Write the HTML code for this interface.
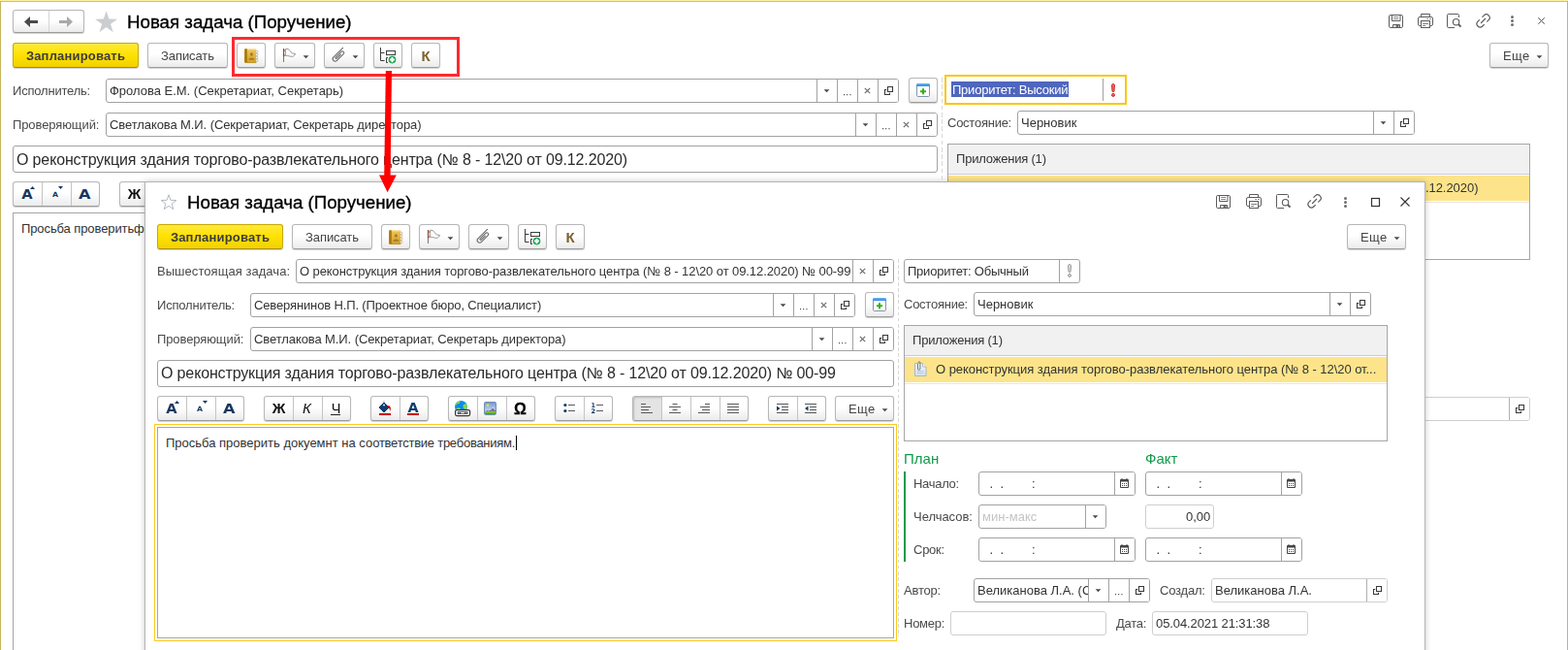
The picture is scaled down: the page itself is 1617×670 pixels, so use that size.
<!DOCTYPE html><html lang="ru"><head><meta charset="utf-8"><title>Новая задача (Поручение)</title><style>
*{box-sizing:border-box;margin:0;padding:0}
html,body{width:1617px;height:670px;overflow:hidden;background:#fff}
body{font-family:"Liberation Sans",sans-serif;font-size:13px;color:#333;position:relative}
#root{position:absolute;left:0;top:0;width:1617px;height:670px;overflow:hidden}
.t,.v,.bt,.ga,.gb{will-change:transform}
.t.lcd{will-change:auto}
.a{position:absolute}
.t{position:absolute;white-space:nowrap;line-height:16px;height:16px}
.lbl{color:#4a4a4a}
.btn{position:absolute;border:1px solid #b7b7b7;border-bottom-color:#9c9c9c;border-radius:3px;background:linear-gradient(#ffffff 0%,#ffffff 45%,#ebebeb 100%);box-shadow:0 1px 1px rgba(0,0,0,.18)}
.btn.y{border-color:#c6a800;border-bottom-color:#a78d00;background:linear-gradient(#ffe93a 0%,#ffe100 50%,#f2d000 100%)}
.btn.on{background:#e6e6e6;box-shadow:inset 0 1px 2px rgba(0,0,0,.15)}
.bt{position:absolute;left:0;right:0;text-align:center;white-space:nowrap;line-height:16px;color:#444}
.f{position:absolute;border:1px solid #a2a2a2;border-radius:3px;background:#fff;overflow:hidden}
.f.ro{border-color:#cfcfcf}
.f.ro .s{background:#b0b0b0}
.f .v{position:absolute;left:3px;white-space:nowrap;line-height:16px;color:#333}
.f .s{position:absolute;top:0;bottom:0;width:1px;background:#a2a2a2}
.f .i{position:absolute;top:0;bottom:0;width:21px}
svg{position:absolute;overflow:visible}
.tbl{position:absolute;border:1px solid #a6a6a6;background:#fff}
.tbl .h{position:absolute;left:0;right:0;top:0;height:31px;background:#f1f1f1;border-bottom:1px solid #cdcdcd}
.tbl .r{position:absolute;left:0;right:0;top:32px;height:26px;background:#fde48b}
.tbl .rl{position:absolute;left:0;right:0;top:59px;height:1px;background:#e6e6e6}
.grp{position:absolute;border:1px solid #b7b7b7;border-bottom-color:#9c9c9c;border-radius:3px;background:linear-gradient(#ffffff 0%,#ffffff 45%,#ebebeb 100%);box-shadow:0 1px 1px rgba(0,0,0,.18)}
.grp .d{position:absolute;top:0;bottom:0;width:1px;background:#c4c4c4}
.grp .on{position:absolute;top:0;bottom:0;background:#e4e4e4;box-shadow:inset 1px 1px 2px rgba(0,0,0,.18)}
.ga{position:absolute;font-family:"DejaVu Sans","Liberation Sans",sans-serif;font-weight:bold;color:#17375e;line-height:18px;white-space:nowrap}
.gb{position:absolute;top:4px;text-align:center;font-size:15px;color:#111;line-height:18px;white-space:nowrap}
.dash{width:1px;background:repeating-linear-gradient(to bottom,#d8d8d8 0,#d8d8d8 3.8px,transparent 3.8px,transparent 6.07px)}
.dash.m{background:repeating-linear-gradient(to bottom,#d8d8d8 0,#d8d8d8 4.5px,transparent 4.5px,transparent 7.2px)}
.tbl .r{overflow:hidden}
</style></head><body><div id="root">
<div class="a" id="main" style="left:0;top:0;width:1617px;height:670px;border-left:1px solid #c7b45c;border-right:1px solid #c8b55e;border-top:2px solid #d2c06c;background:#fff"></div>
<div class="a" style="left:0;top:0;width:1617px;height:1px;background:#fdf0a0"></div>
<div class="grp" style="left:13px;top:10px;width:74px;height:24px"><div class="d" style="left:36px;background:#d6d6d6"></div><svg style="left:11px;top:6px" width="14" height="11" viewBox="0 0 14 11"><path d="M0 5.5l6-5.5v4H14v3H6V11z" fill="#4a4a4a"/></svg><svg style="left:47px;top:6px" width="14" height="11" viewBox="0 0 14 11"><path d="M14 5.5l-6-5.5v4H0v3h8V11z" fill="#a9a9a9"/></svg></div>
<svg style="left:97px;top:11px" width="25" height="23" viewBox="0 0 25 23"><path d="M12.60 0.30L15.36 8.60L24.11 8.66L17.07 13.85L19.71 22.19L12.60 17.10L5.49 22.19L8.13 13.85L1.09 8.66L9.84 8.60z" fill="#cbced1"/></svg>
<div class="t " style="left:131px;top:12px;font-size:18.7px;color:#000;line-height:22px;height:22px;-webkit-text-stroke:0.35px #000;">Новая задача (Поручение)</div>
<svg style="left:1432px;top:15px" width="15" height="14" viewBox="0 0 15 14"><rect x="0.5" y="0.5" width="14" height="13" rx="1.3" fill="#fff" stroke="#5c5c5c"/><path d="M3.5 0.5v6h8.5v-6" fill="none" stroke="#5c5c5c"/><path d="M5.2 2.5h5M5.2 4.5h5" stroke="#7a7a7a" stroke-width="0.9"/><path d="M4.5 13.5v-3h7v3" fill="none" stroke="#5c5c5c"/><rect x="7.5" y="11" width="3" height="2.5" fill="#6a6a6a"/></svg>
<svg style="left:1462px;top:14px" width="16" height="15" viewBox="0 0 16 15"><path d="M3.5 3.5v-3h9v3" fill="none" stroke="#5c5c5c"/><rect x="0.5" y="3.5" width="15" height="9" rx="1.6" fill="#fff" stroke="#5c5c5c"/><rect x="3.5" y="7.5" width="9" height="7" fill="#fff" stroke="#5c5c5c"/><path d="M5.2 10.5h6M5.2 12.5h3M9.3 5.5h1.7M12 5.5h1.7" stroke="#6e6e6e" stroke-width="0.9"/></svg>
<svg style="left:1492px;top:14px" width="15" height="15" viewBox="0 0 15 15"><path d="M12.5 4v-2.5a1 1 0 0 0 -1-1h-10a1 1 0 0 0 -1 1v12a1 1 0 0 0 1 1h6.5" fill="none" stroke="#5c5c5c"/><circle cx="9.6" cy="8.7" r="3.2" fill="#fff" stroke="#5c5c5c" stroke-width="1.1"/><path d="M11.9 11l2.6 2.7" stroke="#5c5c5c" stroke-width="1.9"/></svg>
<svg style="left:1522px;top:14px" width="16" height="15" viewBox="0 0 16 15"><g transform="translate(7.6 7.4) rotate(-45)" fill="none" stroke="#5c5c5c" stroke-width="1.2" stroke-linecap="round"><path d="M2.3 -3.4H4.5a3.4 3.4 0 0 1 0 6.8H2.3"/><path d="M-2.3 3.4H-4.5a3.4 3.4 0 0 1 0 -6.8H-2.3"/><path d="M-3 0H3"/></g></svg>
<svg style="left:1557px;top:15px" width="5" height="13" viewBox="0 0 5 13"><circle cx="2.5" cy="2.4" r="1.5" fill="#707070"/><circle cx="2.5" cy="6.5" r="1.5" fill="#707070"/><circle cx="2.5" cy="10.6" r="1.5" fill="#707070"/></svg>
<svg style="left:1586px;top:18px" width="7" height="7" viewBox="0 0 7 7"><path d="M0.3 0.3l6.4 6.4M6.7 0.3l-6.4 6.4" stroke="#555" stroke-width="1" fill="none"/></svg>
<div class="btn y" style="left:13px;top:44px;width:130px;height:26px">
<div class="bt" style="top:5px;font-weight:bold;color:#3c3c3c;letter-spacing:0.18px;">Запланировать</div>

</div>
<div class="btn " style="left:152px;top:44px;width:83px;height:26px">
<div class="bt" style="top:5px;letter-spacing:-0.1px;">Записать</div>

</div>
<div class="btn " style="left:244px;top:44px;width:30px;height:26px">
<svg style="left:7px;top:5px" width="15" height="16" viewBox="0 0 15 16"><defs><linearGradient id="bk" x1="0" y1="0" x2="0" y2="1"><stop offset="0" stop-color="#efc55c"/><stop offset="1" stop-color="#d39e2a"/></linearGradient></defs><circle cx="12.6" cy="3.4" r="1.3" fill="#fff" stroke="#a8a8a8" stroke-width="0.8"/><circle cx="12.6" cy="6.4" r="1.3" fill="#fff" stroke="#a8a8a8" stroke-width="0.8"/><circle cx="12.6" cy="9.4" r="1.3" fill="#fff" stroke="#a8a8a8" stroke-width="0.8"/><circle cx="12.6" cy="12.4" r="1.3" fill="#fff" stroke="#a8a8a8" stroke-width="0.8"/><path d="M1.2 0.3h10a1 1 0 0 1 1 1v13.4h-11a1 1 0 0 1-1-1v-12.4a1 1 0 0 1 1-1z" fill="url(#bk)"/><path d="M0.2 1.3a1 1 0 0 1 1-1h1.6v14.4h-1.6a1 1 0 0 1-1-1z" fill="#a97708"/><path d="M2.8 0.8h9" stroke="#fdeeb9" stroke-width="0.9"/><path d="M2.8 14.6h9.4" stroke="#b98a1c" stroke-width="0.8"/><ellipse cx="7.4" cy="6" rx="1.5" ry="1.8" fill="#a57c1e"/><path d="M4.4 11.8c0-3 6-3 6 0z" fill="#a57c1e"/></svg>
</div>
<div class="btn " style="left:283px;top:44px;width:42px;height:26px">
<svg style="left:7px;top:5px" width="15" height="15" viewBox="0 0 15 15"><path d="M3.4 0.6C5.5 -0.2 7 0.8 8.2 2.6S10.5 5.6 13.3 5.2C13.7 6 12.5 8.2 10.2 8.3S6.5 7.2 3.4 7.4z" fill="#fff" stroke="#8a8a8a" stroke-width="0.9"/><path d="M1.5 0v14" stroke="#7c7c7c" stroke-width="1.1"/><path d="M1.5 0v8.6M1.5 2h1.6M1.5 7h1.6" stroke="#8c4a3e" stroke-width="1.1"/></svg><svg class="a" style="left:28px;top:12px" width="7" height="4" viewBox="0 0 7 4"><path d="M0.6 0.3h5.8L3.5 3.3z" fill="#4a4a4a"/></svg>
</div>
<div class="btn " style="left:334px;top:44px;width:42px;height:26px">
<svg style="left:8px;top:5px" width="13" height="14" viewBox="0 0 13 14"><g transform="translate(6 7.4) rotate(45)" fill="none" stroke="#666" stroke-width="1.05" stroke-linecap="round"><path d="M-2.5 -9V4.7a2.5 2.5 0 0 0 5 0V-4.9a1.7 1.7 0 0 0 -3.4 0V3.2a0.85 0.85 0 0 0 1.7 0V-2.6"/></g></svg><svg class="a" style="left:28px;top:12px" width="7" height="4" viewBox="0 0 7 4"><path d="M0.6 0.3h5.8L3.5 3.3z" fill="#4a4a4a"/></svg>
</div>
<div class="btn " style="left:385px;top:44px;width:30px;height:26px">
<svg style="left:5px;top:4px" width="18" height="17" viewBox="0 0 18 17"><path d="M1.5 0v13.5h4" fill="none" stroke="#3c3c3c" stroke-width="1"/><path d="M1.5 5.5h4" fill="none" stroke="#3c3c3c"/><rect x="7.5" y="3.5" width="9" height="4" fill="#fff" stroke="#3c3c3c"/><path d="M9 10.5h-1.5v5h1.5" fill="none" stroke="#3c3c3c"/><circle cx="13.5" cy="12.6" r="3.8" fill="#10a04a"/><path d="M13.5 10v5.2M10.9 12.6h5.2" stroke="#fff" stroke-width="2"/></svg>
</div>
<div class="btn " style="left:424px;top:44px;width:30px;height:26px">
<div class="bt" style="top:4px;font-weight:bold;font-size:15px;color:#7d6230;line-height:18px">К</div>
</div>
<div class="btn " style="left:1536px;top:44px;width:61px;height:26px">
<div class="bt" style="top:5px;left:13px;right:auto;text-align:left;letter-spacing:0.4px;">Еще</div>
<svg class="a" style="left:47px;top:12px" width="7" height="4" viewBox="0 0 7 4"><path d="M0.6 0.3h5.8L3.5 3.3z" fill="#4a4a4a"/></svg>
</div>
<div class="t lbl" style="left:13px;top:86px;letter-spacing:-0.2px;">Исполнитель:</div>
<div class="f " style="left:109px;top:81px;width:818px;height:25px">
<div class="v" style="top:4px;letter-spacing:-0.01px;">Фролова Е.М. (Секретариат, Секретарь)</div>
<div class="i" style="left:732px;background:#fff"></div><div class="s" style="left:732px"></div>
<svg class="a" style="left:739px;top:10px" width="7" height="4" viewBox="0 0 7 4"><path d="M0.6 0.3h5.8L3.5 3.3z" fill="#4a4a4a"/></svg>
<div class="i" style="left:753px;background:#fff"></div><div class="s" style="left:753px"></div>
<svg style="left:760px;top:15px" width="9" height="2" viewBox="0 0 9 2"><path d="M0 0h1.1v1.2h-1.1zM3.1 0h1.1v1.2h-1.1zM6.4 0h1.1v1.2h-1.1z" fill="#505050"/></svg>
<div class="i" style="left:774px;background:#fff"></div><div class="s" style="left:774px"></div>
<svg style="left:781px;top:8px" width="7" height="7" viewBox="0 0 7 7"><path d="M0.8 0.8l5.4 5.4M6.2 0.8l-5.4 5.4" stroke="#666" stroke-width="1.1" fill="none"/></svg>
<div class="i" style="left:795px;background:#fff"></div><div class="s" style="left:795px"></div>
<svg style="left:802px;top:7px" width="10" height="10" viewBox="0 0 10 10"><path d="M2.2 3.5H0.5v5h5V6.8" stroke="#3a3a3a" stroke-width="1.1" fill="none"/><path d="M3.5 0.5h5v5h-5z" stroke="#3a3a3a" stroke-width="1.1" fill="none"/></svg>
</div>
<div class="btn " style="left:937px;top:80px;width:30px;height:26px">
<svg style="left:7px;top:5px" width="14" height="14" viewBox="0 0 14 14"><defs><linearGradient id="cp" x1="0" y1="0" x2="0" y2="1"><stop offset="0" stop-color="#6ab6f5"/><stop offset="1" stop-color="#2f8be0"/></linearGradient></defs><rect x="0.5" y="0.5" width="13" height="13" rx="1.2" fill="#fff" stroke="#8096ad"/><path d="M0 1.5a1.5 1.5 0 0 1 1.5-1.5h11a1.5 1.5 0 0 1 1.5 1.5v1.5h-14z" fill="url(#cp)"/><path d="M7 5.2v6M4 8.2h6" stroke="#35b010" stroke-width="2"/></svg>
</div>
<div class="a dash m" style="left:971px;top:80px;height:600px"></div>
<div class="a" style="left:974px;top:77px;width:188px;height:31px;border:2px solid #fac710;background:#fff"><div class="a" style="left:5px;top:5px;background:#4e66bd;width:121px;height:16px"></div><div class="t" style="left:6px;top:6px;color:#fff;letter-spacing:-0.23px">Приоритет: Высокий</div><div class="a" style="left:161px;top:2px;width:1px;height:23px;background:#a2a2a2"></div><svg style="left:170px;top:7px" width="4" height="14" viewBox="0 0 4 14"><path d="M2 0.5c1 0 1.5 0.7 1.5 1.6l-0.5 6c-0.1 0.9-1.9 0.9-2 0l-0.5-6c0-0.9 0.5-1.6 1.5-1.6z" fill="#ee655c" stroke="#c8201e" stroke-width="0.9"/><circle cx="2" cy="11.9" r="1.5" fill="#ee655c" stroke="#c8201e" stroke-width="0.9"/></svg></div>
<div class="t lbl" style="left:13px;top:121px;letter-spacing:-0.1px;">Проверяющий:</div>
<div class="f " style="left:109px;top:116px;width:858px;height:25px">
<div class="v" style="top:4px;letter-spacing:-0.09px;">Светлакова М.И. (Секретариат, Секретарь директора)</div>
<div class="i" style="left:772px;background:#fff"></div><div class="s" style="left:772px"></div>
<svg class="a" style="left:779px;top:10px" width="7" height="4" viewBox="0 0 7 4"><path d="M0.6 0.3h5.8L3.5 3.3z" fill="#4a4a4a"/></svg>
<div class="i" style="left:793px;background:#fff"></div><div class="s" style="left:793px"></div>
<svg style="left:800px;top:15px" width="9" height="2" viewBox="0 0 9 2"><path d="M0 0h1.1v1.2h-1.1zM3.1 0h1.1v1.2h-1.1zM6.4 0h1.1v1.2h-1.1z" fill="#505050"/></svg>
<div class="i" style="left:814px;background:#fff"></div><div class="s" style="left:814px"></div>
<svg style="left:821px;top:8px" width="7" height="7" viewBox="0 0 7 7"><path d="M0.8 0.8l5.4 5.4M6.2 0.8l-5.4 5.4" stroke="#666" stroke-width="1.1" fill="none"/></svg>
<div class="i" style="left:835px;background:#fff"></div><div class="s" style="left:835px"></div>
<svg style="left:842px;top:7px" width="10" height="10" viewBox="0 0 10 10"><path d="M2.2 3.5H0.5v5h5V6.8" stroke="#3a3a3a" stroke-width="1.1" fill="none"/><path d="M3.5 0.5h5v5h-5z" stroke="#3a3a3a" stroke-width="1.1" fill="none"/></svg>
</div>
<div class="t lbl" style="left:977px;top:119px;letter-spacing:-0.25px;">Состояние:</div>
<div class="f " style="left:1049px;top:114px;width:410px;height:25px">
<div class="v" style="top:4px;">Черновик</div>
<div class="i" style="left:366px;background:#fff"></div><div class="s" style="left:366px"></div>
<svg class="a" style="left:373px;top:10px" width="7" height="4" viewBox="0 0 7 4"><path d="M0.6 0.3h5.8L3.5 3.3z" fill="#4a4a4a"/></svg>
<div class="i" style="left:387px;background:#fff"></div><div class="s" style="left:387px"></div>
<svg style="left:394px;top:7px" width="10" height="10" viewBox="0 0 10 10"><path d="M2.2 3.5H0.5v5h5V6.8" stroke="#3a3a3a" stroke-width="1.1" fill="none"/><path d="M3.5 0.5h5v5h-5z" stroke="#3a3a3a" stroke-width="1.1" fill="none"/></svg>
</div>
<div class="f " style="left:13px;top:150px;width:954px;height:28px">
<div class="v" style="top:4px;font-size:16px;line-height:20px;color:#2b2b2b;letter-spacing:-0.14px;">О реконструкция здания торгово-развлекательного центра (№ 8 - 12\20 от 09.12.2020)</div>
</div>
<div class="tbl" style="left:977px;top:148px;width:601px;height:120px"><div class="h"><div class="t" style="left:8px;top:7px;letter-spacing:-0.2px">Приложения (1)</div></div><div class="rl"></div><div class="r"><div class="t" style="left:29px;top:5px;letter-spacing:-0.045px">О реконструкция здания торгово-развлекательного центра (№ 8 - 12\20 от 09.12.2020)</div></div></div>
<div class="grp" style="left:13px;top:187px;width:90px;height:26px"><div class="d" style="left:29px"></div><div class="d" style="left:59px"></div><svg style="left:0;top:0" width="90" height="24"><text transform="translate(8.3 16.6) scale(1.1 1)" font-family="DejaVu Sans, Liberation Sans, sans-serif" font-weight="bold" font-size="13.3" fill="#17375e">A</text></svg><svg style="left:17px;top:4px" width="5" height="3" viewBox="0 0 5 3"><path d="M0 3h5L2.5 0z" fill="#17375e"/></svg><svg style="left:0;top:0" width="90" height="24"><text transform="translate(39.9 14.7) scale(1.08 1)" font-family="DejaVu Sans, Liberation Sans, sans-serif" font-weight="bold" font-size="7.2" fill="#17375e">A</text></svg><svg style="left:46px;top:4px" width="5" height="3" viewBox="0 0 5 3"><path d="M0 0h5L2.5 3z" fill="#17375e"/></svg><svg style="left:0;top:0" width="90" height="24"><text transform="translate(67.1 16.6) scale(1.13 1)" font-family="DejaVu Sans, Liberation Sans, sans-serif" font-weight="bold" font-size="14.3" fill="#17375e">A</text></svg></div>
<div class="grp" style="left:123px;top:187px;width:90px;height:26px"><div class="gb" style="left:0;width:29px;font-weight:bold;top:3px">Ж</div></div>
<div class="a" style="left:13px;top:219px;width:910px;height:460px;border:1px solid #a6a6a6;background:#fff"></div>
<div class="t lcd" style="left:22px;top:228px;letter-spacing:-0.1px;color:#333;">Просьба проверитьффф</div>
<div class="f ro" style="left:1400px;top:409px;width:178px;height:25px">
<div class="i" style="left:155px;background:#fff"></div><div class="s" style="left:155px"></div>
<svg style="left:162px;top:7px" width="10" height="10" viewBox="0 0 10 10"><path d="M2.2 3.5H0.5v5h5V6.8" stroke="#3a3a3a" stroke-width="1.1" fill="none"/><path d="M3.5 0.5h5v5h-5z" stroke="#3a3a3a" stroke-width="1.1" fill="none"/></svg>
</div>
<div class="a" style="left:239px;top:38px;width:235px;height:41px;border:3px solid #ff2a2e"></div>
<div class="a" id="modal" style="left:149px;top:187px;width:1321px;height:500px;background:#fff;border:1px solid #b4b4b4;box-shadow:0 0 6px rgba(0,0,0,.22)"></div>
<svg style="left:165px;top:200px" width="18" height="17" viewBox="0 0 18 17"><path d="M9.00 0.80L10.94 6.33L16.80 6.47L12.14 10.02L13.82 15.63L9.00 12.30L4.18 15.63L5.86 10.02L1.20 6.47L7.06 6.33z" fill="#fff" stroke="#b4bac2" stroke-width="1"/></svg>
<div class="t " style="left:193px;top:198px;font-size:18.7px;color:#000;line-height:22px;height:22px;-webkit-text-stroke:0.35px #000;">Новая задача (Поручение)</div>
<svg style="left:1254px;top:201px" width="15" height="14" viewBox="0 0 15 14"><rect x="0.5" y="0.5" width="14" height="13" rx="1.3" fill="#fff" stroke="#5c5c5c"/><path d="M3.5 0.5v6h8.5v-6" fill="none" stroke="#5c5c5c"/><path d="M5.2 2.5h5M5.2 4.5h5" stroke="#7a7a7a" stroke-width="0.9"/><path d="M4.5 13.5v-3h7v3" fill="none" stroke="#5c5c5c"/><rect x="7.5" y="11" width="3" height="2.5" fill="#6a6a6a"/></svg>
<svg style="left:1285px;top:200px" width="16" height="15" viewBox="0 0 16 15"><path d="M3.5 3.5v-3h9v3" fill="none" stroke="#5c5c5c"/><rect x="0.5" y="3.5" width="15" height="9" rx="1.6" fill="#fff" stroke="#5c5c5c"/><rect x="3.5" y="7.5" width="9" height="7" fill="#fff" stroke="#5c5c5c"/><path d="M5.2 10.5h6M5.2 12.5h3M9.3 5.5h1.7M12 5.5h1.7" stroke="#6e6e6e" stroke-width="0.9"/></svg>
<svg style="left:1316px;top:200px" width="15" height="15" viewBox="0 0 15 15"><path d="M12.5 4v-2.5a1 1 0 0 0 -1-1h-10a1 1 0 0 0 -1 1v12a1 1 0 0 0 1 1h6.5" fill="none" stroke="#5c5c5c"/><circle cx="9.6" cy="8.7" r="3.2" fill="#fff" stroke="#5c5c5c" stroke-width="1.1"/><path d="M11.9 11l2.6 2.7" stroke="#5c5c5c" stroke-width="1.9"/></svg>
<svg style="left:1348px;top:200px" width="16" height="15" viewBox="0 0 16 15"><g transform="translate(7.6 7.4) rotate(-45)" fill="none" stroke="#5c5c5c" stroke-width="1.2" stroke-linecap="round"><path d="M2.3 -3.4H4.5a3.4 3.4 0 0 1 0 6.8H2.3"/><path d="M-2.3 3.4H-4.5a3.4 3.4 0 0 1 0 -6.8H-2.3"/><path d="M-3 0H3"/></g></svg>
<svg style="left:1385px;top:202px" width="5" height="13" viewBox="0 0 5 13"><circle cx="2.5" cy="2.4" r="1.5" fill="#707070"/><circle cx="2.5" cy="6.5" r="1.5" fill="#707070"/><circle cx="2.5" cy="10.6" r="1.5" fill="#707070"/></svg>
<svg style="left:1414px;top:204px" width="9" height="9" viewBox="0 0 9 9"><rect x="0.5" y="0.5" width="8" height="8" fill="none" stroke="#333" stroke-width="1.2"/></svg>
<svg style="left:1444px;top:203px" width="10" height="10" viewBox="0 0 10 10"><path d="M0.5 0.5l9 9M9.5 0.5l-9 9" stroke="#333" stroke-width="1.1" fill="none"/></svg>
<div class="btn y" style="left:162px;top:231px;width:130px;height:26px">
<div class="bt" style="top:5px;font-weight:bold;color:#3c3c3c;letter-spacing:0.18px;">Запланировать</div>

</div>
<div class="btn " style="left:301px;top:231px;width:83px;height:26px">
<div class="bt" style="top:5px;letter-spacing:-0.1px;">Записать</div>

</div>
<div class="btn " style="left:393px;top:231px;width:30px;height:26px">
<svg style="left:7px;top:5px" width="15" height="16" viewBox="0 0 15 16"><defs><linearGradient id="bk" x1="0" y1="0" x2="0" y2="1"><stop offset="0" stop-color="#efc55c"/><stop offset="1" stop-color="#d39e2a"/></linearGradient></defs><circle cx="12.6" cy="3.4" r="1.3" fill="#fff" stroke="#a8a8a8" stroke-width="0.8"/><circle cx="12.6" cy="6.4" r="1.3" fill="#fff" stroke="#a8a8a8" stroke-width="0.8"/><circle cx="12.6" cy="9.4" r="1.3" fill="#fff" stroke="#a8a8a8" stroke-width="0.8"/><circle cx="12.6" cy="12.4" r="1.3" fill="#fff" stroke="#a8a8a8" stroke-width="0.8"/><path d="M1.2 0.3h10a1 1 0 0 1 1 1v13.4h-11a1 1 0 0 1-1-1v-12.4a1 1 0 0 1 1-1z" fill="url(#bk)"/><path d="M0.2 1.3a1 1 0 0 1 1-1h1.6v14.4h-1.6a1 1 0 0 1-1-1z" fill="#a97708"/><path d="M2.8 0.8h9" stroke="#fdeeb9" stroke-width="0.9"/><path d="M2.8 14.6h9.4" stroke="#b98a1c" stroke-width="0.8"/><ellipse cx="7.4" cy="6" rx="1.5" ry="1.8" fill="#a57c1e"/><path d="M4.4 11.8c0-3 6-3 6 0z" fill="#a57c1e"/></svg>
</div>
<div class="btn " style="left:432px;top:231px;width:42px;height:26px">
<svg style="left:7px;top:5px" width="15" height="15" viewBox="0 0 15 15"><path d="M3.4 0.6C5.5 -0.2 7 0.8 8.2 2.6S10.5 5.6 13.3 5.2C13.7 6 12.5 8.2 10.2 8.3S6.5 7.2 3.4 7.4z" fill="#fff" stroke="#8a8a8a" stroke-width="0.9"/><path d="M1.5 0v14" stroke="#7c7c7c" stroke-width="1.1"/><path d="M1.5 0v8.6M1.5 2h1.6M1.5 7h1.6" stroke="#8c4a3e" stroke-width="1.1"/></svg><svg class="a" style="left:28px;top:12px" width="7" height="4" viewBox="0 0 7 4"><path d="M0.6 0.3h5.8L3.5 3.3z" fill="#4a4a4a"/></svg>
</div>
<div class="btn " style="left:483px;top:231px;width:42px;height:26px">
<svg style="left:8px;top:5px" width="13" height="14" viewBox="0 0 13 14"><g transform="translate(6 7.4) rotate(45)" fill="none" stroke="#666" stroke-width="1.05" stroke-linecap="round"><path d="M-2.5 -9V4.7a2.5 2.5 0 0 0 5 0V-4.9a1.7 1.7 0 0 0 -3.4 0V3.2a0.85 0.85 0 0 0 1.7 0V-2.6"/></g></svg><svg class="a" style="left:28px;top:12px" width="7" height="4" viewBox="0 0 7 4"><path d="M0.6 0.3h5.8L3.5 3.3z" fill="#4a4a4a"/></svg>
</div>
<div class="btn " style="left:534px;top:231px;width:30px;height:26px">
<svg style="left:5px;top:4px" width="18" height="17" viewBox="0 0 18 17"><path d="M1.5 0v13.5h4" fill="none" stroke="#3c3c3c" stroke-width="1"/><path d="M1.5 5.5h4" fill="none" stroke="#3c3c3c"/><rect x="7.5" y="3.5" width="9" height="4" fill="#fff" stroke="#3c3c3c"/><path d="M9 10.5h-1.5v5h1.5" fill="none" stroke="#3c3c3c"/><circle cx="13.5" cy="12.6" r="3.8" fill="#10a04a"/><path d="M13.5 10v5.2M10.9 12.6h5.2" stroke="#fff" stroke-width="2"/></svg>
</div>
<div class="btn " style="left:573px;top:231px;width:30px;height:26px">
<div class="bt" style="top:4px;font-weight:bold;font-size:15px;color:#7d6230;line-height:18px">К</div>
</div>
<div class="btn " style="left:1389px;top:231px;width:61px;height:26px">
<div class="bt" style="top:5px;left:13px;right:auto;text-align:left;letter-spacing:0.4px;">Еще</div>
<svg class="a" style="left:47px;top:12px" width="7" height="4" viewBox="0 0 7 4"><path d="M0.6 0.3h5.8L3.5 3.3z" fill="#4a4a4a"/></svg>
</div>
<div class="t lbl" style="left:162px;top:272px;letter-spacing:0.05px;">Вышестоящая задача:</div>
<div class="f " style="left:305px;top:267px;width:617px;height:25px">
<div class="v" style="top:4px;letter-spacing:-0.08px;">О реконструкция здания торгово-развлекательного центра (№ 8 - 12\20 от 09.12.2020) № 00-99</div>
<div class="i" style="left:573px;background:#fff"></div><div class="s" style="left:573px"></div>
<svg style="left:580px;top:8px" width="7" height="7" viewBox="0 0 7 7"><path d="M0.8 0.8l5.4 5.4M6.2 0.8l-5.4 5.4" stroke="#666" stroke-width="1.1" fill="none"/></svg>
<div class="i" style="left:594px;background:#fff"></div><div class="s" style="left:594px"></div>
<svg style="left:601px;top:7px" width="10" height="10" viewBox="0 0 10 10"><path d="M2.2 3.5H0.5v5h5V6.8" stroke="#3a3a3a" stroke-width="1.1" fill="none"/><path d="M3.5 0.5h5v5h-5z" stroke="#3a3a3a" stroke-width="1.1" fill="none"/></svg>
</div>
<div class="f" style="left:932px;top:267px;width:182px;height:25px"><div class="v" style="top:4px;letter-spacing:-0.23px">Приоритет: Обычный</div><div class="s" style="left:159px"></div><svg style="left:168px;top:4px" width="4" height="14" viewBox="0 0 4 14"><path d="M2 0.5c1 0 1.5 0.7 1.5 1.6l-0.5 6c-0.1 0.9-1.9 0.9-2 0l-0.5-6c0-0.9 0.5-1.6 1.5-1.6z" fill="#d9d9d9" stroke="#8e8e8e" stroke-width="0.9"/><circle cx="2" cy="11.9" r="1.5" fill="#d9d9d9" stroke="#8e8e8e" stroke-width="0.9"/></svg></div>
<div class="t lbl" style="left:162px;top:307px;letter-spacing:-0.2px;">Исполнитель:</div>
<div class="f " style="left:258px;top:302px;width:624px;height:25px">
<div class="v" style="top:4px;letter-spacing:-0.135px;">Северянинов Н.П. (Проектное бюро, Специалист)</div>
<div class="i" style="left:538px;background:#fff"></div><div class="s" style="left:538px"></div>
<svg class="a" style="left:545px;top:10px" width="7" height="4" viewBox="0 0 7 4"><path d="M0.6 0.3h5.8L3.5 3.3z" fill="#4a4a4a"/></svg>
<div class="i" style="left:559px;background:#fff"></div><div class="s" style="left:559px"></div>
<svg style="left:566px;top:15px" width="9" height="2" viewBox="0 0 9 2"><path d="M0 0h1.1v1.2h-1.1zM3.1 0h1.1v1.2h-1.1zM6.4 0h1.1v1.2h-1.1z" fill="#505050"/></svg>
<div class="i" style="left:580px;background:#fff"></div><div class="s" style="left:580px"></div>
<svg style="left:587px;top:8px" width="7" height="7" viewBox="0 0 7 7"><path d="M0.8 0.8l5.4 5.4M6.2 0.8l-5.4 5.4" stroke="#666" stroke-width="1.1" fill="none"/></svg>
<div class="i" style="left:601px;background:#fff"></div><div class="s" style="left:601px"></div>
<svg style="left:608px;top:7px" width="10" height="10" viewBox="0 0 10 10"><path d="M2.2 3.5H0.5v5h5V6.8" stroke="#3a3a3a" stroke-width="1.1" fill="none"/><path d="M3.5 0.5h5v5h-5z" stroke="#3a3a3a" stroke-width="1.1" fill="none"/></svg>
</div>
<div class="btn " style="left:892px;top:301px;width:30px;height:26px">
<svg style="left:7px;top:5px" width="14" height="14" viewBox="0 0 14 14"><defs><linearGradient id="cp" x1="0" y1="0" x2="0" y2="1"><stop offset="0" stop-color="#6ab6f5"/><stop offset="1" stop-color="#2f8be0"/></linearGradient></defs><rect x="0.5" y="0.5" width="13" height="13" rx="1.2" fill="#fff" stroke="#8096ad"/><path d="M0 1.5a1.5 1.5 0 0 1 1.5-1.5h11a1.5 1.5 0 0 1 1.5 1.5v1.5h-14z" fill="url(#cp)"/><path d="M7 5.2v6M4 8.2h6" stroke="#35b010" stroke-width="2"/></svg>
</div>
<div class="t lbl" style="left:932px;top:306px;letter-spacing:-0.25px;">Состояние:</div>
<div class="f " style="left:1004px;top:301px;width:410px;height:25px">
<div class="v" style="top:4px;">Черновик</div>
<div class="i" style="left:366px;background:#fff"></div><div class="s" style="left:366px"></div>
<svg class="a" style="left:373px;top:10px" width="7" height="4" viewBox="0 0 7 4"><path d="M0.6 0.3h5.8L3.5 3.3z" fill="#4a4a4a"/></svg>
<div class="i" style="left:387px;background:#fff"></div><div class="s" style="left:387px"></div>
<svg style="left:394px;top:7px" width="10" height="10" viewBox="0 0 10 10"><path d="M2.2 3.5H0.5v5h5V6.8" stroke="#3a3a3a" stroke-width="1.1" fill="none"/><path d="M3.5 0.5h5v5h-5z" stroke="#3a3a3a" stroke-width="1.1" fill="none"/></svg>
</div>
<div class="t lbl" style="left:162px;top:342px;letter-spacing:-0.1px;">Проверяющий:</div>
<div class="f " style="left:258px;top:337px;width:664px;height:25px">
<div class="v" style="top:4px;letter-spacing:-0.09px;">Светлакова М.И. (Секретариат, Секретарь директора)</div>
<div class="i" style="left:578px;background:#fff"></div><div class="s" style="left:578px"></div>
<svg class="a" style="left:585px;top:10px" width="7" height="4" viewBox="0 0 7 4"><path d="M0.6 0.3h5.8L3.5 3.3z" fill="#4a4a4a"/></svg>
<div class="i" style="left:599px;background:#fff"></div><div class="s" style="left:599px"></div>
<svg style="left:606px;top:15px" width="9" height="2" viewBox="0 0 9 2"><path d="M0 0h1.1v1.2h-1.1zM3.1 0h1.1v1.2h-1.1zM6.4 0h1.1v1.2h-1.1z" fill="#505050"/></svg>
<div class="i" style="left:620px;background:#fff"></div><div class="s" style="left:620px"></div>
<svg style="left:627px;top:8px" width="7" height="7" viewBox="0 0 7 7"><path d="M0.8 0.8l5.4 5.4M6.2 0.8l-5.4 5.4" stroke="#666" stroke-width="1.1" fill="none"/></svg>
<div class="i" style="left:641px;background:#fff"></div><div class="s" style="left:641px"></div>
<svg style="left:648px;top:7px" width="10" height="10" viewBox="0 0 10 10"><path d="M2.2 3.5H0.5v5h5V6.8" stroke="#3a3a3a" stroke-width="1.1" fill="none"/><path d="M3.5 0.5h5v5h-5z" stroke="#3a3a3a" stroke-width="1.1" fill="none"/></svg>
</div>
<div class="f " style="left:162px;top:371px;width:760px;height:28px">
<div class="v" style="top:3px;font-size:16px;line-height:20px;color:#2b2b2b;letter-spacing:-0.14px;">О реконструкция здания торгово-развлекательного центра (№ 8 - 12\20 от 09.12.2020) № 00-99</div>
</div>
<div class="a dash" style="left:926px;top:267px;height:389px"></div>
<div class="tbl" style="left:932px;top:335px;width:499px;height:120px"><div class="h"><div class="t" style="left:8px;top:7px;letter-spacing:-0.2px">Приложения (1)</div></div><div class="rl"></div><div class="r"><svg style="left:10px;top:4px" width="13" height="16" viewBox="0 0 13 16"><defs><linearGradient id="dg" x1="0" y1="0" x2="0" y2="1"><stop offset="0" stop-color="#f4f8fd"/><stop offset="1" stop-color="#cfe0f3"/></linearGradient></defs><path d="M0.5 2.5h8l3.5 3.5v9.5h-11.5z" fill="url(#dg)" stroke="#9db4d0" stroke-width="0.9"/><path d="M8.5 2.5v3.5h3.5" fill="#fff" stroke="#9db4d0" stroke-width="0.9"/><path d="M2.5 10.5h7M2.5 12.5h7" stroke="#b3c7e0" stroke-width="0.9"/><path d="M3.5 3v5a1.2 1.2 0 0 0 2.4 0V1.8a1 1 0 0 0 -2 0" fill="none" stroke="#6b6b6b" stroke-width="0.9"/></svg><div class="t" style="left:32px;top:5px;letter-spacing:-0.045px">О реконструкция здания торгово-развлекательного центра (№ 8 - 12\20 от...</div></div></div>
<div class="grp" style="left:162px;top:408px;width:90px;height:26px"><div class="d" style="left:29px"></div><div class="d" style="left:59px"></div><svg style="left:0;top:0" width="90" height="24"><text transform="translate(8.3 16.6) scale(1.1 1)" font-family="DejaVu Sans, Liberation Sans, sans-serif" font-weight="bold" font-size="13.3" fill="#17375e">A</text></svg><svg style="left:17px;top:4px" width="5" height="3" viewBox="0 0 5 3"><path d="M0 3h5L2.5 0z" fill="#17375e"/></svg><svg style="left:0;top:0" width="90" height="24"><text transform="translate(39.9 14.7) scale(1.08 1)" font-family="DejaVu Sans, Liberation Sans, sans-serif" font-weight="bold" font-size="7.2" fill="#17375e">A</text></svg><svg style="left:46px;top:4px" width="5" height="3" viewBox="0 0 5 3"><path d="M0 0h5L2.5 3z" fill="#17375e"/></svg><svg style="left:0;top:0" width="90" height="24"><text transform="translate(67.1 16.6) scale(1.13 1)" font-family="DejaVu Sans, Liberation Sans, sans-serif" font-weight="bold" font-size="14.3" fill="#17375e">A</text></svg></div>
<div class="grp" style="left:272px;top:408px;width:90px;height:26px"><div class="d" style="left:29px"></div><div class="d" style="left:59px"></div><div class="gb" style="left:0;width:29px;font-weight:bold;top:3px">Ж</div><div class="gb" style="left:29px;width:29px;font-style:italic;top:3px">К</div><div class="gb" style="left:59px;width:29px;font-size:14.5px;top:3px">Ч</div><div class="a" style="left:68px;top:18px;width:10px;height:1px;background:#222"></div></div>
<div class="grp" style="left:382px;top:408px;width:60px;height:26px"><div class="d" style="left:29px"></div><svg style="left:7px;top:4px" width="15" height="16" viewBox="0 0 15 16"><path d="M6 0v2.4" stroke="#9db0c4" stroke-width="1"/><path d="M6 2L11 7L6 12L1 7z" fill="#0f3c6c" stroke="#0f3c6c" stroke-width="1" stroke-linejoin="round"/><circle cx="6" cy="4.6" r="1" fill="#e8eef5"/><path d="M10.6 4.9c2.2 0.6 3.2 3.2 1.4 6.2c0.2-2-0.4-3.6-2.2-4.8z" fill="#cc0000"/><rect x="1" y="13" width="12" height="2" fill="#cc0000"/></svg><svg style="left:0;top:0" width="60" height="24"><text transform="translate(37.5 15.8) scale(1.07 1)" font-family="DejaVu Sans, Liberation Sans, sans-serif" font-weight="bold" font-size="13.4" fill="#0f3c6c">A</text></svg><div class="a" style="left:37px;top:17px;width:12px;height:2px;background:#cc0000"></div></div>
<div class="grp" style="left:462px;top:408px;width:90px;height:26px"><div class="d" style="left:29px"></div><div class="d" style="left:59px"></div><svg style="left:6px;top:4px" width="17" height="17" viewBox="0 0 17 17"><defs><clipPath id="gc"><circle cx="6.5" cy="6.4" r="6.4"/></clipPath><linearGradient id="im1" x1="0" y1="0" x2="0" y2="1"><stop offset="0" stop-color="#7296d2"/><stop offset="1" stop-color="#e6f0fa"/></linearGradient><linearGradient id="im2" x1="0" y1="0" x2="0" y2="1"><stop offset="0" stop-color="#93d435"/><stop offset="1" stop-color="#3f9c12"/></linearGradient></defs><circle cx="6.5" cy="6.4" r="6.4" fill="#0a8bf0"/><g clip-path="url(#gc)" fill="#8bd348"><path d="M0 3c2-2.5 4-3 6-2.5l-1.5 2.5l-2.5 0.5l-1 2z"/><path d="M8.5 4.5l2.5-1.5l2.5 1.5l-0.5 3.5l-2.5 1l-2-2z"/><path d="M1.5 8l3-1l2 2.5l-1 3l-3-0.5z"/></g><rect x="0.6" y="9.6" width="15" height="6" rx="1.5" fill="#fff" stroke="#333" stroke-width="1.2"/><path d="M2.8 12.6h10.6" stroke="#333" stroke-width="2.6"/><path d="M3.6 12.6h1.6M11 12.6h1.6" stroke="#8fc8f5" stroke-width="1"/><path d="M6 12.6h4.2" stroke="#fff" stroke-width="1.2"/></svg><svg style="left:36px;top:5px" width="13" height="14" viewBox="0 0 13 14"><rect x="0.5" y="0.5" width="12" height="13" rx="1.2" fill="url(#im1)" stroke="#6f8fb3"/><path d="M1 10.2l2-1.2l2 0.6l2.5-1.2l1.6-2l1.2 1.4l1.7 1.4v1z" fill="#77778a"/><path d="M8.7 7l0.9-1.1l0.7 0.9z" fill="#fff"/><rect x="1" y="10" width="11" height="3" fill="url(#im2)"/><path d="M4 1.8l0.6 1.3l1.3 0.6l-1.3 0.6l-0.6 1.3l-0.6-1.3l-1.3-0.6l1.3-0.6z" fill="#fff200"/></svg><div class="gb" style="left:59px;width:29px;font-weight:bold;font-size:16px;top:4px;color:#000;-webkit-text-stroke:0.3px #000">Ω</div></div>
<div class="grp" style="left:572px;top:408px;width:60px;height:26px"><div class="d" style="left:29px"></div><svg style="left:8px;top:6px" width="14" height="12" viewBox="0 0 14 12"><circle cx="1.9" cy="2.5" r="1.6" fill="#0f3c6c"/><circle cx="1.9" cy="8.5" r="1.6" fill="#0f3c6c"/><path d="M5 2.5h7M5 8.5h7" stroke="#5a5a5a"/></svg><svg style="left:36px;top:5px" width="16" height="14" viewBox="0 0 16 14"><text x="0.6" y="5.7" font-size="6.5" font-weight="bold" fill="#0f3c6c" font-family="DejaVu Sans, Liberation Sans, sans-serif">1</text><text x="0.6" y="12" font-size="6.5" font-weight="bold" fill="#0f3c6c" font-family="DejaVu Sans, Liberation Sans, sans-serif">2</text><path d="M6 3.5h7M6 9.5h7" stroke="#5a5a5a"/></svg></div>
<div class="grp" style="left:652px;top:408px;width:120px;height:26px"><div class="on" style="left:0;width:29px;border-radius:2px 0 0 2px"></div><div class="d" style="left:29px"></div><div class="d" style="left:59px"></div><div class="d" style="left:89px"></div><svg style="left:8px;top:7px" width="14" height="12" viewBox="0 0 14 12"><path d="M0 0.5h5M0 3.5h10M0 6.5h8M0 9.5h12" stroke="#5a5a5a" stroke-width="1"/></svg><svg style="left:37px;top:7px" width="14" height="12" viewBox="0 0 14 12"><path d="M3.5 0.5h5M0 3.5h12M3.5 6.5h5M0 9.5h12" stroke="#5a5a5a" stroke-width="1"/></svg><svg style="left:67px;top:7px" width="14" height="12" viewBox="0 0 14 12"><path d="M7 0.5h5M2 3.5h10M4 6.5h8M0 9.5h12" stroke="#5a5a5a" stroke-width="1"/></svg><svg style="left:97px;top:7px" width="14" height="12" viewBox="0 0 14 12"><path d="M0 0.5h12M0 3.5h12M0 6.5h12M0 9.5h12" stroke="#5a5a5a" stroke-width="1"/></svg></div>
<div class="grp" style="left:792px;top:408px;width:60px;height:26px"><div class="d" style="left:29px"></div><svg style="left:8px;top:7px" width="14" height="12" viewBox="0 0 14 12"><path d="M0 0.5h12M5 3.5h7M5 6.5h7M0 9.5h12" stroke="#555"/><path d="M0 2.5l3.5 2.5-3.5 2.5z" fill="#17375e"/></svg><svg style="left:37px;top:7px" width="14" height="12" viewBox="0 0 14 12"><path d="M0 0.5h12M5 3.5h7M5 6.5h7M0 9.5h12" stroke="#555"/><path d="M3.5 2.5l-3.5 2.5 3.5 2.5z" fill="#17375e"/></svg></div>
<div class="btn " style="left:861px;top:408px;width:61px;height:26px">
<div class="bt" style="top:5px;left:13px;right:auto;text-align:left;letter-spacing:0.4px;">Еще</div>
<svg class="a" style="left:47px;top:12px" width="7" height="4" viewBox="0 0 7 4"><path d="M0.6 0.3h5.8L3.5 3.3z" fill="#4a4a4a"/></svg>
</div>
<div class="a" style="left:159px;top:437px;width:766px;height:224px;border:1px solid #fbc91f"></div>
<div class="a" style="left:162px;top:440px;width:760px;height:218px;border:1px solid #a6a6a6;background:#fff"></div>
<div class="t lcd" style="left:171px;top:449px;color:#333;">Просьба проверить докуемнт на со<span style="letter-spacing:-0.25px">ответствие требованиям.</span></div>
<div class="a" style="left:532px;top:449px;width:1px;height:15px;background:#000"></div>
<div class="t " style="left:932px;top:464px;font-size:15px;color:#139a4c;line-height:18px;height:18px;">План</div>
<div class="t " style="left:1181px;top:464px;font-size:15px;color:#139a4c;line-height:18px;height:18px;">Факт</div>
<div class="a" style="left:932px;top:486px;width:2px;height:93px;background:#139a4c"></div>
<div class="t lbl" style="left:942px;top:491px;letter-spacing:-0.3px;">Начало:</div>
<div class="f " style="left:1009px;top:486px;width:162px;height:25px">
<div class="v" style="top:4px;left:7px;">&nbsp;.&nbsp;&nbsp;.&nbsp;&nbsp;&nbsp;&nbsp;&nbsp;&nbsp;&nbsp;&nbsp;:</div>
<div class="i" style="left:139px;background:#fff"></div><div class="s" style="left:139px"></div>
<svg style="left:145px;top:6px" width="9" height="10" viewBox="0 0 9 10"><path d="M0.5 1.5h8v8h-8z" fill="#fff" stroke="#444"/><path d="M0.5 1.5h8v2h-8z" fill="#444"/><path d="M2 0v2M7 0v2" stroke="#444"/><path d="M2 5h1v1h-1zM4 5h1v1h-1zM6 5h1v1h-1zM2 7h1v1h-1zM4 7h1v1h-1zM6 7h1v1h-1z" fill="#444"/></svg>
</div>
<div class="f " style="left:1181px;top:486px;width:162px;height:25px">
<div class="v" style="top:4px;left:7px;">&nbsp;.&nbsp;&nbsp;.&nbsp;&nbsp;&nbsp;&nbsp;&nbsp;&nbsp;&nbsp;&nbsp;:</div>
<div class="i" style="left:139px;background:#fff"></div><div class="s" style="left:139px"></div>
<svg style="left:145px;top:6px" width="9" height="10" viewBox="0 0 9 10"><path d="M0.5 1.5h8v8h-8z" fill="#fff" stroke="#444"/><path d="M0.5 1.5h8v2h-8z" fill="#444"/><path d="M2 0v2M7 0v2" stroke="#444"/><path d="M2 5h1v1h-1zM4 5h1v1h-1zM6 5h1v1h-1zM2 7h1v1h-1zM4 7h1v1h-1zM6 7h1v1h-1z" fill="#444"/></svg>
</div>
<div class="t lbl" style="left:942px;top:525px;letter-spacing:-0.03px;">Челчасов:</div>
<div class="f " style="left:1009px;top:520px;width:132px;height:25px">
<div class="v" style="top:4px;color:#c4c4c4;">мин-макс</div>
<div class="i" style="left:109px;background:#fff"></div><div class="s" style="left:109px"></div>
<svg class="a" style="left:116px;top:10px" width="7" height="4" viewBox="0 0 7 4"><path d="M0.6 0.3h5.8L3.5 3.3z" fill="#4a4a4a"/></svg>
</div>
<div class="f ro" style="left:1181px;top:520px;width:71px;height:25px">
<div class="v" style="top:4px;left:auto;right:4px;right:3px;">0,00</div>
</div>
<div class="t lbl" style="left:942px;top:559px;letter-spacing:-0.25px;">Срок:</div>
<div class="f " style="left:1009px;top:554px;width:162px;height:25px">
<div class="v" style="top:4px;left:7px;">&nbsp;.&nbsp;&nbsp;.&nbsp;&nbsp;&nbsp;&nbsp;&nbsp;&nbsp;&nbsp;&nbsp;:</div>
<div class="i" style="left:139px;background:#fff"></div><div class="s" style="left:139px"></div>
<svg style="left:145px;top:6px" width="9" height="10" viewBox="0 0 9 10"><path d="M0.5 1.5h8v8h-8z" fill="#fff" stroke="#444"/><path d="M0.5 1.5h8v2h-8z" fill="#444"/><path d="M2 0v2M7 0v2" stroke="#444"/><path d="M2 5h1v1h-1zM4 5h1v1h-1zM6 5h1v1h-1zM2 7h1v1h-1zM4 7h1v1h-1zM6 7h1v1h-1z" fill="#444"/></svg>
</div>
<div class="f " style="left:1181px;top:554px;width:162px;height:25px">
<div class="v" style="top:4px;left:7px;">&nbsp;.&nbsp;&nbsp;.&nbsp;&nbsp;&nbsp;&nbsp;&nbsp;&nbsp;&nbsp;&nbsp;:</div>
<div class="i" style="left:139px;background:#fff"></div><div class="s" style="left:139px"></div>
<svg style="left:145px;top:6px" width="9" height="10" viewBox="0 0 9 10"><path d="M0.5 1.5h8v8h-8z" fill="#fff" stroke="#444"/><path d="M0.5 1.5h8v2h-8z" fill="#444"/><path d="M2 0v2M7 0v2" stroke="#444"/><path d="M2 5h1v1h-1zM4 5h1v1h-1zM6 5h1v1h-1zM2 7h1v1h-1zM4 7h1v1h-1zM6 7h1v1h-1z" fill="#444"/></svg>
</div>
<div class="t lbl" style="left:932px;top:601px;letter-spacing:-0.2px;">Автор:</div>
<div class="f " style="left:1004px;top:596px;width:182px;height:25px">
<div class="v" style="top:4px;">Великанова Л.А. (Секретариат, Секретарь)</div>
<div class="i" style="left:117px;background:#fff"></div><div class="s" style="left:117px"></div>
<svg class="a" style="left:124px;top:10px" width="7" height="4" viewBox="0 0 7 4"><path d="M0.6 0.3h5.8L3.5 3.3z" fill="#4a4a4a"/></svg>
<div class="i" style="left:138px;background:#fff"></div><div class="s" style="left:138px"></div>
<svg style="left:145px;top:15px" width="9" height="2" viewBox="0 0 9 2"><path d="M0 0h1.1v1.2h-1.1zM3.1 0h1.1v1.2h-1.1zM6.4 0h1.1v1.2h-1.1z" fill="#505050"/></svg>
<div class="i" style="left:159px;background:#fff"></div><div class="s" style="left:159px"></div>
<svg style="left:166px;top:7px" width="10" height="10" viewBox="0 0 10 10"><path d="M2.2 3.5H0.5v5h5V6.8" stroke="#3a3a3a" stroke-width="1.1" fill="none"/><path d="M3.5 0.5h5v5h-5z" stroke="#3a3a3a" stroke-width="1.1" fill="none"/></svg>
</div>
<div class="t lbl" style="left:1196px;top:601px;letter-spacing:-0.2px;">Создал:</div>
<div class="f ro" style="left:1249px;top:596px;width:182px;height:25px">
<div class="v" style="top:4px;">Великанова Л.А.</div>
<div class="i" style="left:159px;background:#fff"></div><div class="s" style="left:159px"></div>
<svg style="left:166px;top:7px" width="10" height="10" viewBox="0 0 10 10"><path d="M2.2 3.5H0.5v5h5V6.8" stroke="#3a3a3a" stroke-width="1.1" fill="none"/><path d="M3.5 0.5h5v5h-5z" stroke="#3a3a3a" stroke-width="1.1" fill="none"/></svg>
</div>
<div class="t lbl" style="left:932px;top:635px;letter-spacing:-0.25px;">Номер:</div>
<div class="f ro" style="left:980px;top:630px;width:161px;height:25px">
</div>
<div class="t lbl" style="left:1151px;top:635px;letter-spacing:-0.28px;">Дата:</div>
<div class="f ro" style="left:1188px;top:630px;width:161px;height:25px">
<div class="v" style="top:4px;letter-spacing:-0.1px;left:2.5px;">05.04.2021 21:31:38</div>
</div>
<svg style="left:388px;top:72px" width="26" height="128" viewBox="0 0 26 128"><path d="M9.8 1H16L14.6 109.5H8.2z" fill="#ff0000"/><path d="M3 108.5H20.8L11.6 126.3z" fill="#ff0000"/></svg>
</div></body></html>
